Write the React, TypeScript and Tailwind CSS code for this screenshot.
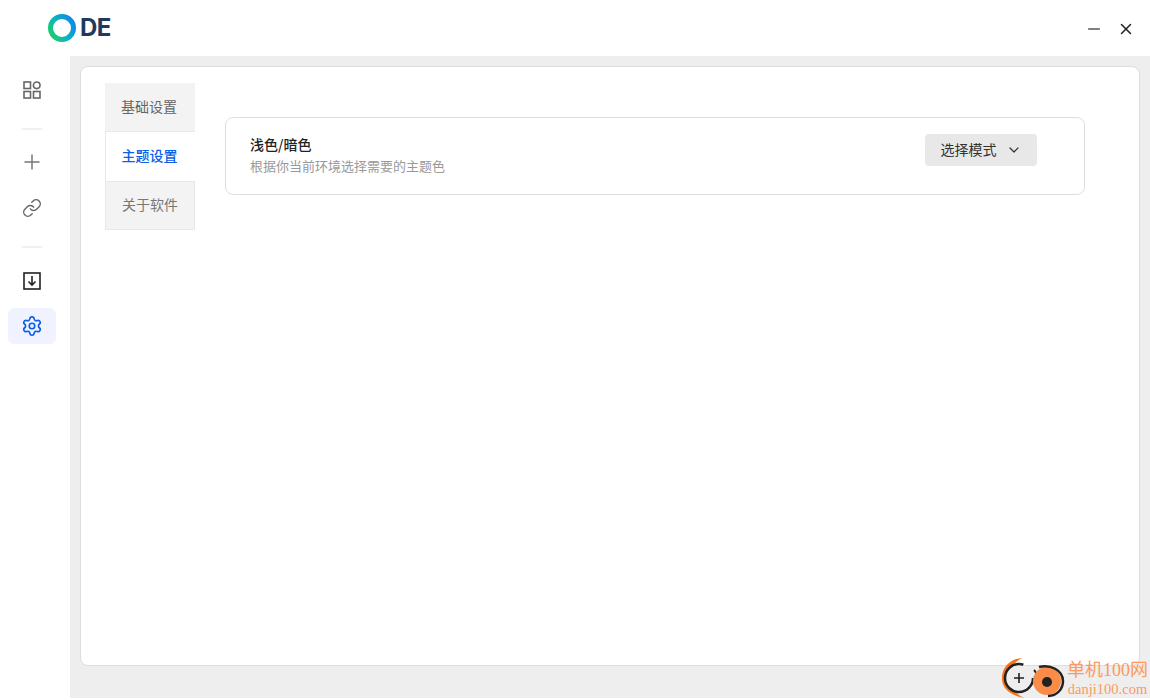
import { ChevronDown, Link, Minus, Plus, Settings, X } from "lucide-react";

const FONT = "font-['Noto_Sans_CJK_SC','Noto_Sans',sans-serif]";

function Logo() {
  return (
    <div className="flex items-center">
      <svg width="28" height="28" viewBox="0 0 28 28" fill="none">
        <defs>
          <linearGradient id="ring" x1="1" y1="22" x2="27" y2="6" gradientUnits="userSpaceOnUse">
            <stop offset="0" stopColor="#1bd05f" />
            <stop offset="0.4" stopColor="#0fb9b5" />
            <stop offset="1" stopColor="#0a84f5" />
          </linearGradient>
        </defs>
        <circle cx="14" cy="14" r="11.5" stroke="url(#ring)" strokeWidth="5" />
      </svg>
      <span className="ml-[4px] text-[24px] leading-none font-bold tracking-[-0.5px] text-[#22395f] font-['Inter',sans-serif]">DE</span>
    </div>
  );
}

function GridIcon() {
  return (
    <svg width="18" height="18" viewBox="0 0 18 18" fill="none" stroke="#666" strokeWidth="1.6">
      <rect x="1" y="1" width="6.5" height="6.5" />
      <circle cx="13.7" cy="4.3" r="3.3" />
      <rect x="1" y="10.5" width="6.5" height="6.5" />
      <rect x="10.5" y="10.5" width="6.5" height="6.5" />
    </svg>
  );
}

function DownloadBox() {
  return (
    <svg width="18" height="18" viewBox="0 0 18 18" fill="none" stroke="#222" strokeWidth="1.6">
      <rect x="1" y="1" width="16" height="16" />
      <path d="M9 4v9M5.5 9.5 9 13l3.5-3.5" />
    </svg>
  );
}

function Sidebar() {
  return (
    <aside className="flex w-[70px] shrink-0 flex-col items-center bg-white pr-[6px]">
      <div className="mt-[12px] flex h-[44px] w-full items-center justify-center">
        <GridIcon />
      </div>
      <div className="mt-[16px] h-[2px] w-[20px] bg-[#f0f0f0]" />
      <div className="mt-[10px] flex h-[44px] w-full items-center justify-center">
        <Plus size={24} strokeWidth={1.5} className="text-[#777]" />
      </div>
      <div className="mt-[2px] flex h-[44px] w-full items-center justify-center">
        <Link size={20} strokeWidth={1.7} className="text-[#666]" />
      </div>
      <div className="mt-[16px] h-[2px] w-[20px] bg-[#f0f0f0]" />
      <div className="mt-[11px] flex h-[44px] w-full items-center justify-center">
        <DownloadBox />
      </div>
      <div className="mt-[5px] flex h-[36px] w-[48px] items-center justify-center rounded-[6px] bg-[#f0f3ff]">
        <Settings size={22} strokeWidth={1.8} className="text-[#0b5fe6]" />
      </div>
    </aside>
  );
}

function Tabs() {
  return (
    <nav className="flex w-[90px] shrink-0 flex-col text-[14px] leading-none">
      <div className="flex h-[49px] items-center justify-center border-b border-[#e8e8e8] bg-[#f3f3f3] pb-[2px] pr-[2px] text-[#666]">基础设置</div>
      <div className="flex h-[49px] items-center justify-center border-l border-[#e8e8e8] bg-white pb-[4px] pr-[2px] font-medium text-[#0b5fe6]">主题设置</div>
      <div className="flex h-[49px] items-center justify-center border border-[#e8e8e8] bg-[#f3f3f3] pb-[4px] text-[#777]">关于软件</div>
    </nav>
  );
}

function ThemeRow() {
  return (
    <section className="ml-[30px] mt-[34px] flex h-[78px] w-[860px] items-center rounded-[8px] border border-[#dedede] bg-white pl-[24px] pr-[47px]">
      <div className="flex-1 pb-[2px]">
        <div className="text-[14px] leading-[22px] font-medium text-[#222]">浅色/暗色</div>
        <div className="text-[13px] leading-[22px] text-[#999]">根据你当前环境选择需要的主题色</div>
      </div>
      <button className="-mt-[13px] flex h-[32px] w-[112px] items-center justify-center gap-[9px] rounded-[4px] bg-[#e8e8e8] text-[14px] text-[#333]">
        选择模式
        <ChevronDown size={16} strokeWidth={1.8} className="text-[#333]" />
      </button>
    </section>
  );
}

function Watermark() {
  return (
    <div className="absolute right-[2px] top-[658px] flex items-center">
      <svg width="76" height="42" viewBox="0 0 76 42" fill="none">
        <path d="M20 0C7 1-1 11 0 22c1 9 8 15 22 18-8-4-13-9-14-18C7 12 11 5 20 0Z" fill="#f97316" />
        <circle cx="17" cy="20" r="14" fill="#eee" stroke="#222" strokeWidth="2.5" strokeDasharray="70 18" />
        <path d="M17 15v10M12 20h10" stroke="#222" strokeWidth="1.6" />
        <path d="M32 12c3 3 3 5 2 8" stroke="#222" strokeWidth="2" />
        <circle cx="45" cy="23" r="14" fill="#fb8c47" />
        <path d="M37 9c11-3 24 3 24 14 0 8-6 15-15 15" stroke="#222" strokeWidth="2.5" />
        <circle cx="45" cy="24" r="5" fill="#222" />
      </svg>
      <div className="-ml-[11px] flex flex-col items-center text-[#fb9a5c] font-['Liberation_Serif','Noto_Sans_CJK_SC',serif]">
        <span className="text-[18px] leading-[20px]">单机100网</span>
        <span className="text-[14.5px] leading-[18px]">danji100.com</span>
      </div>
    </div>
  );
}

export default function App() {
  return (
    <div className={`relative flex h-[700px] w-[1150px] flex-col overflow-hidden bg-white ${FONT}`}>
      <header className="flex h-[56px] shrink-0 items-center justify-between bg-white pl-[48px] pr-[15px]">
        <Logo />
        <div className="flex items-center gap-[14px] pt-[2px]">
          <Minus size={18} strokeWidth={2.2} className="text-[#555]" />
          <X size={18} strokeWidth={2} className="text-[#222]" />
        </div>
      </header>
      <div className="flex h-[642px] shrink-0">
        <Sidebar />
        <main className="flex-1 bg-[#eeeeee] pb-[32px] pl-[10px] pr-[10px] pt-[10px]">
          <div className="flex h-[600px] rounded-[8px] border border-[#dddddd] bg-white pl-[24px] pt-[16px]">
            <Tabs />
            <ThemeRow />
          </div>
        </main>
      </div>
      <Watermark />
    </div>
  );
}
